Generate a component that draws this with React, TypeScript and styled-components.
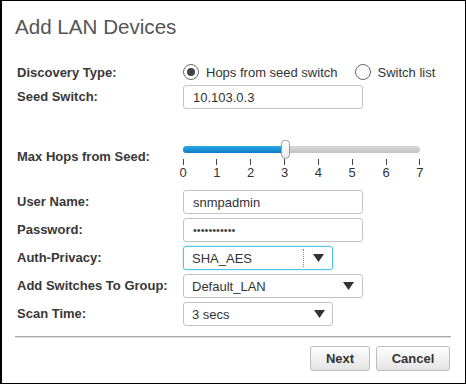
import React, { useState } from "react";
import styled, { createGlobalStyle } from "styled-components";

const GlobalStyle = createGlobalStyle`
  html, body {
    margin: 0;
    padding: 0;
    background: #ffffff;
  }
  * {
    box-sizing: border-box;
  }
`;

const Dialog = styled.div`
  width: 466px;
  height: 384px;
  border-top: 1px solid #000;
  border-left: 2px solid #000;
  border-right: 1px solid #000;
  border-bottom: 1px solid #000;
  padding: 14px 14px 0 13px;
  font-family: "Liberation Sans", Arial, sans-serif;
  background: #fff;
  display: flex;
  flex-direction: column;
`;

const Title = styled.h1`
  margin: 0;
  font-size: 20.6px;
  line-height: 24px;
  font-weight: 400;
  color: #555;
`;

const Row = styled.div<{ $top?: number; $height?: number; $align?: string }>`
  display: grid;
  grid-template-columns: 168px 1fr;
  align-items: ${(p) => p.$align || "center"};
  margin-top: ${(p) => p.$top ?? 4}px;
  min-height: ${(p) => p.$height ?? 24}px;
`;

const Label = styled.div<{ $offset?: number }>`
  padding-left: 2px;
  font-size: 13px;
  line-height: 24px;
  font-weight: 700;
  color: #383838;
  margin-top: ${(p) => p.$offset ?? 0}px;
`;

const RadioGroup = styled.div`
  display: flex;
  align-items: center;
  gap: 17px;
`;

const RadioOption = styled.label`
  display: flex;
  align-items: center;
  gap: 7px;
  font-size: 13px;
  color: #333;
  cursor: pointer;
`;

const RadioCircle = styled.span<{ $checked?: boolean }>`
  width: 16px;
  height: 16px;
  border-radius: 50%;
  border: 1.5px solid #6a6a6a;
  background: #fff;
  display: flex;
  align-items: center;
  justify-content: center;

  &::after {
    content: "";
    width: 8px;
    height: 8px;
    border-radius: 50%;
    background: ${(p) => (p.$checked ? "#444" : "transparent")};
  }
`;

const TextBox = styled.div<{ $width?: number }>`
  width: ${(p) => p.$width ?? 180}px;
  height: 24px;
  border: 1px solid #c4c4c4;
  border-radius: 3px;
  padding-left: 9px;
  display: flex;
  align-items: center;
  font-size: 13px;
  color: #333;
  background: #fff;
`;

const Dots = styled.span`
  font-size: 11px;
  letter-spacing: 0;
  color: #444;
`;

const SelectBox = styled.div<{ $width?: number; $focused?: boolean }>`
  width: ${(p) => p.$width ?? 150}px;
  height: 24px;
  border: 1px solid ${(p) => (p.$focused ? "#55c2ec" : "#c4c4c4")};
  box-shadow: ${(p) => (p.$focused ? "0 0 2px #9adcf5" : "none")};
  border-radius: 3px;
  display: flex;
  align-items: stretch;
  font-size: 13px;
  color: #333;
  background: #fff;
`;

const SelectValue = styled.div`
  flex: 1;
  padding-left: 8px;
  display: flex;
  align-items: center;
`;

const ArrowCell = styled.div<{ $divider?: boolean; $width?: number }>`
  width: ${(p) => p.$width ?? 29}px;
  display: flex;
  align-items: center;
  justify-content: center;
  border-left: ${(p) => (p.$divider ? "1px dotted #888" : "none")};
  margin: ${(p) => (p.$divider ? "2px 0" : "0")};
`;

const Arrow = () => (
  <svg width="11" height="8" viewBox="0 0 11 8">
    <polygon points="0,0 11,0 5.5,8" fill="#333" />
  </svg>
);

const SliderWrap = styled.div`
  width: 237px;
  display: flex;
  flex-direction: column;
`;

const TrackArea = styled.div`
  position: relative;
  height: 26px;
`;

const Track = styled.div`
  position: absolute;
  left: 0;
  right: 0;
  top: 13px;
  height: 7px;
  border-radius: 4px;
  background: linear-gradient(#d8d8d8, #c4c4c4);
  overflow: hidden;
`;

const Fill = styled.div`
  height: 100%;
  background: linear-gradient(#2aa8e6, #0a7cc4);
`;

const Thumb = styled.div`
  position: absolute;
  top: 7px;
  width: 9px;
  height: 19px;
  margin-left: -4px;
  border: 1px solid #9a9a9a;
  border-radius: 4px 4px 5px 5px;
  background: linear-gradient(#ffffff, #ececec);
`;

const Ticks = styled.div`
  display: flex;
  justify-content: space-between;
  margin: 0 -6px;
`;

const Tick = styled.div`
  width: 12px;
  display: flex;
  flex-direction: column;
  align-items: center;
  font-size: 13px;
  line-height: 16px;
  color: #333;

  &::before {
    content: "";
    width: 1px;
    height: 6px;
    background: #444;
  }
`;

const Divider = styled.div`
  margin-top: 10px;
  height: 1px;
  background: #a9a9a9;
  box-shadow: 0 1px 0 #e2e2e2;
`;

const Footer = styled.div`
  display: flex;
  justify-content: flex-end;
  gap: 6px;
  margin-top: 9px;
  padding-right: 1px;
`;

const Button = styled.button<{ $width: number }>`
  width: ${(p) => p.$width}px;
  height: 25px;
  border: 1px solid #bdbdbd;
  border-radius: 3px;
  background: linear-gradient(#fefefe, #e4e4e4);
  font-family: "Liberation Sans", Arial, sans-serif;
  font-size: 13px;
  font-weight: 700;
  color: #333;
  padding: 0;
  cursor: pointer;
`;

const MAX = 7;

export default function App() {
  const [mode, setMode] = useState<"hops" | "list">("hops");
  const [hops, setHops] = useState(3);
  const pct = (hops / MAX) * 100;

  return (
    <>
      <GlobalStyle />
      <Dialog>
        <Title>Add LAN Devices</Title>

        <Row $top={20}>
          <Label $offset={2}>Discovery Type:</Label>
          <RadioGroup>
            <RadioOption onClick={() => setMode("hops")}>
              <RadioCircle $checked={mode === "hops"} />
              Hops from seed switch
            </RadioOption>
            <RadioOption onClick={() => setMode("list")}>
              <RadioCircle $checked={mode === "list"} />
              Switch list
            </RadioOption>
          </RadioGroup>
        </Row>

        <Row $top={0}>
          <Label>Seed Switch:</Label>
          <TextBox>10.103.0.3</TextBox>
        </Row>

        <Row $top={24} $align="start">
          <Label $offset={12}>Max Hops from Seed:</Label>
          <SliderWrap>
            <TrackArea>
              <Track>
                <Fill style={{ width: `${pct}%` }} />
              </Track>
              <Thumb style={{ left: `${pct}%` }} />
            </TrackArea>
            <Ticks>
              {Array.from({ length: MAX + 1 }, (_, i) => (
                <Tick key={i} onClick={() => setHops(i)}>
                  {i}
                </Tick>
              ))}
            </Ticks>
          </SliderWrap>
        </Row>

        <Row $top={9}>
          <Label>User Name:</Label>
          <TextBox>snmpadmin</TextBox>
        </Row>

        <Row>
          <Label>Password:</Label>
          <TextBox>
            <Dots>•••••••••••</Dots>
          </TextBox>
        </Row>

        <Row>
          <Label>Auth-Privacy:</Label>
          <SelectBox $width={150} $focused>
            <SelectValue>SHA_AES</SelectValue>
            <ArrowCell $divider>
              <Arrow />
            </ArrowCell>
          </SelectBox>
        </Row>

        <Row>
          <Label>Add Switches To Group:</Label>
          <SelectBox $width={180}>
            <SelectValue>Default_LAN</SelectValue>
            <ArrowCell $width={27}>
              <Arrow />
            </ArrowCell>
          </SelectBox>
        </Row>

        <Row>
          <Label>Scan Time:</Label>
          <SelectBox $width={150}>
            <SelectValue>3 secs</SelectValue>
            <ArrowCell $width={26}>
              <Arrow />
            </ArrowCell>
          </SelectBox>
        </Row>

        <Divider />

        <Footer>
          <Button $width={60}>Next</Button>
          <Button $width={74}>Cancel</Button>
        </Footer>
      </Dialog>
    </>
  );
}
